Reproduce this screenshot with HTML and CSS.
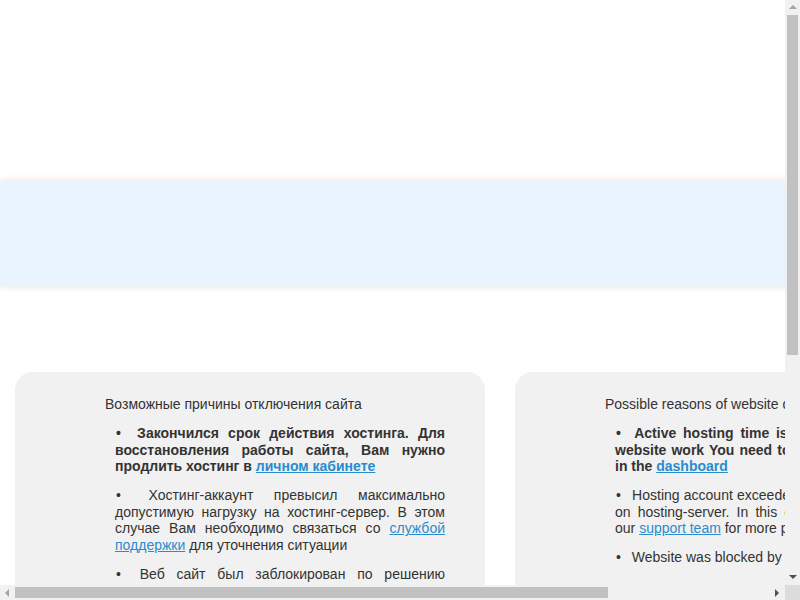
FILE: index.html
```html
<!DOCTYPE html>
<html lang="ru">
<head>
<meta charset="utf-8">
<title>Сайт отключен</title>
<link rel="stylesheet" href="styles.css">
</head>
<body>
<div class="page">
  <div class="top"></div>
  <div class="band"></div>
  <div class="main">
    <div class="card">
      <div class="title">Возможные причины отключения сайта</div>
      <ul class="reasons">
        <li class="strong"><span class="dot">•</span> Закончился срок действия хостинга. Для восстановления работы сайта, Вам нужно продлить хостинг в <a href="#">личном кабинете</a></li>
        <li><span class="dot">•</span> Хостинг-аккаунт превысил максимально допустимую нагрузку на хостинг-сервер. В этом случае Вам необходимо связаться со <a href="#">службой поддержки</a> для уточнения ситуации</li>
        <li><span class="dot">•</span> Веб сайт был заблокирован по решению администрации</li>
      </ul>
    </div>
    <div class="card">
      <div class="title">Possible reasons of website disabling</div>
      <ul class="reasons">
        <li class="strong"><span class="dot">•</span> Active hosting time is expired. For restoring website work You need to continue your hosting in the <a href="#">dashboard</a></li>
        <li><span class="dot">•</span> Hosting account exceeded maximum allowed load on hosting-server. In this case You should contact our <a href="#">support team</a> for more precise information</li>
        <li><span class="dot">•</span> Website was blocked by administration decision</li>
      </ul>
    </div>
  </div>
</div>

<div class="vscroll">
  <div class="arrow arrow-up"></div>
  <div class="vthumb"></div>
  <div class="arrow arrow-down"></div>
</div>
<div class="hscroll">
  <div class="arrow arrow-left"></div>
  <div class="hthumb"></div>
  <div class="arrow arrow-right"></div>
</div>
<div class="corner"></div>
</body>
</html>
```

FILE: styles.css
```css
html, body {
  margin: 0;
  padding: 0;
  background: #ffffff;
}

body {
  font-family: "Liberation Sans", Arial, sans-serif;
  font-size: 14px;
  color: #333333;
}

.page {
  width: 1000px;
}

.top {
  height: 181px;
}

.band {
  height: 105px;
  background: #eaf4fe;
  box-shadow: 0 0 8px rgba(0, 0, 0, 0.12);
}

.main {
  display: flex;
  gap: 30px;
  padding: 86px 15px 15px;
}

.card {
  box-sizing: border-box;
  width: 470px;
  min-height: 568px;
  background: #f1f1f1;
  border-radius: 18px;
  padding: 24px 40px 24px 90px;
}

.title {
  line-height: 16.6px;
}

.reasons {
  list-style: none;
  margin: 12.4px 0 0;
  padding: 0 0 0 10px;
}

.reasons li {
  line-height: 16.6px;
  text-align: justify;
  margin-bottom: 12.4px;
}

.reasons li.strong {
  font-weight: bold;
}

.dot {
  display: inline-block;
  margin-left: 1px;
  margin-right: 7px;
}

.reasons a {
  color: #2a8ccd;
  text-decoration: underline;
}

/* simulated browser scrollbars (overlay) */
.vscroll {
  position: fixed;
  top: 0;
  right: 0;
  width: 15px;
  height: 585px;
  background: #f1f1f1;
  display: flex;
  flex-direction: column;
  align-items: center;
}

.vthumb {
  width: 11px;
  height: 340px;
  background: #c1c1c1;
}

.hscroll {
  position: fixed;
  left: 0;
  bottom: 0;
  width: 785px;
  height: 15px;
  background: #f1f1f1;
  display: flex;
  align-items: center;
}

.hthumb {
  width: 593px;
  height: 11px;
  background: #c1c1c1;
}

.corner {
  position: fixed;
  right: 0;
  bottom: 0;
  width: 15px;
  height: 15px;
  background: #dcdcdc;
}

.arrow {
  width: 0;
  height: 0;
  flex: none;
}

.arrow-up {
  margin: 5px 0 6px;
  border-left: 4px solid transparent;
  border-right: 4px solid transparent;
  border-bottom: 4px solid #a3a3a3;
}

.arrow-down {
  margin-top: auto;
  margin-bottom: 6px;
  border-left: 4px solid transparent;
  border-right: 4px solid transparent;
  border-top: 4px solid #505050;
}

.arrow-left {
  margin: 0 6px 0 5px;
  border-top: 4px solid transparent;
  border-bottom: 4px solid transparent;
  border-right: 4px solid #a3a3a3;
}

.arrow-right {
  margin-left: auto;
  margin-right: 6px;
  border-top: 4px solid transparent;
  border-bottom: 4px solid transparent;
  border-left: 4px solid #505050;
}
```
